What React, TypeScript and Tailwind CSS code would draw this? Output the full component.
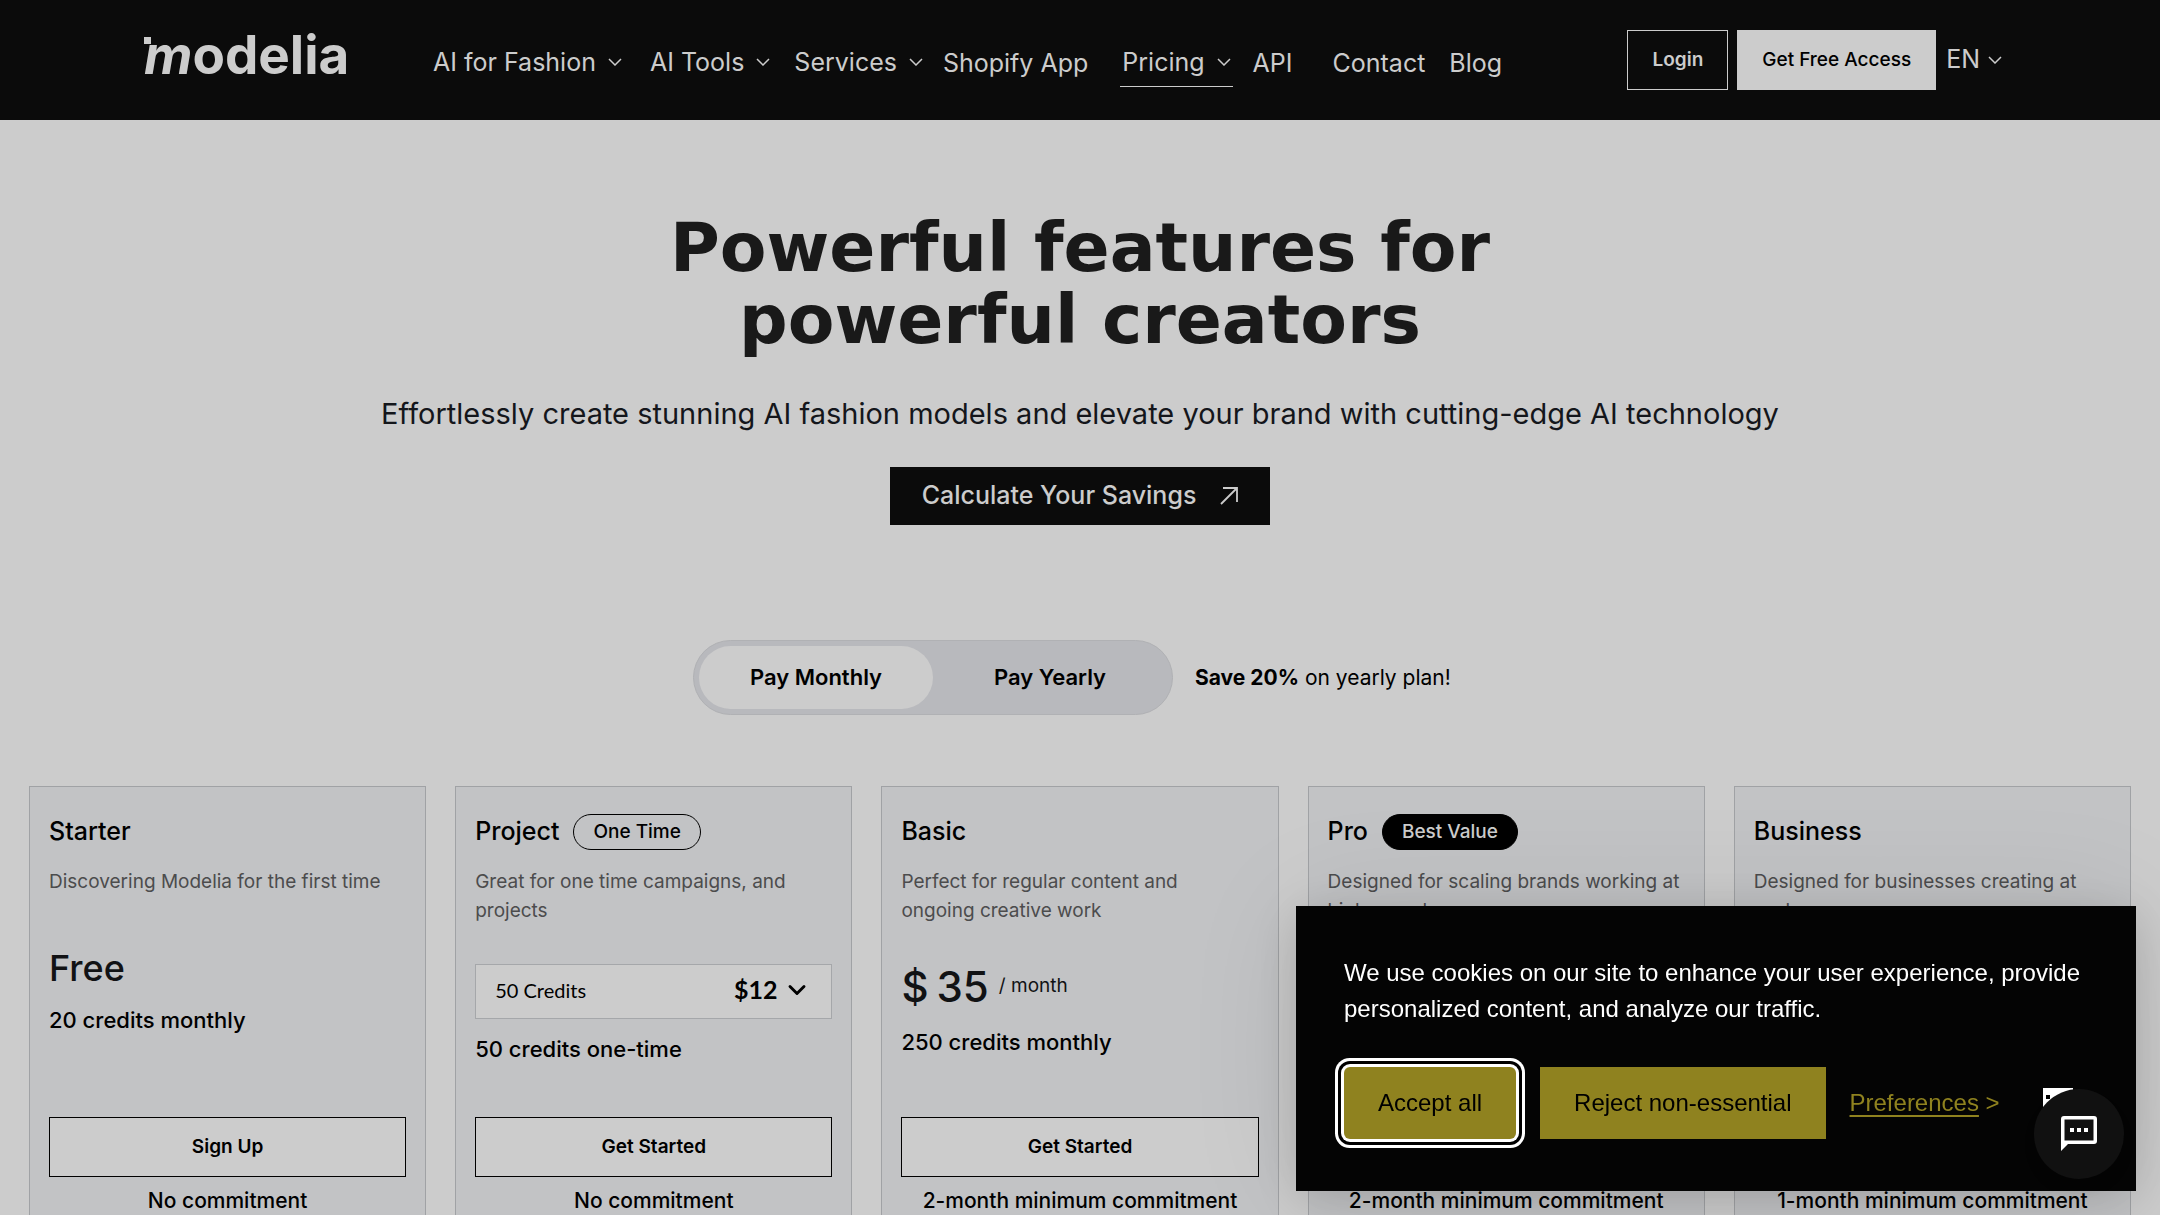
import { ChevronDown } from "lucide-react";

const navItems = [
  { label: "AI for Fashion", menu: true, style: "" },
  { label: "AI Tools", menu: true, style: "ml-7" },
  { label: "Services", menu: true, style: "ml-6" },
  { label: "Shopify App", menu: false, style: "ml-5" },
  { label: "Pricing", menu: true, active: true, style: "ml-8" },
  { label: "API", menu: false, style: "ml-5" },
  { label: "Contact", menu: false, style: "ml-10" },
  { label: "Blog", menu: false, style: "ml-6" },
];

const plans = [
  {
    name: "Starter",
    description: "Discovering Modelia for the first time",
    free: true,
    credits: "20 credits monthly",
    action: "Sign Up",
    commitment: "No commitment",
  },
  {
    name: "Project",
    badge: "One Time",
    badgeStyle: "border-black text-black",
    description: "Great for one time campaigns, and\nprojects",
    packs: ["50 Credits", "100 Credits", "200 Credits"],
    packPrice: "$12",
    credits: "50 credits one-time",
    action: "Get Started",
    commitment: "No commitment",
  },
  {
    name: "Basic",
    description: "Perfect for regular content and\nongoing creative work",
    price: 35,
    credits: "250 credits monthly",
    action: "Get Started",
    commitment: "2-month minimum commitment",
  },
  {
    name: "Pro",
    badge: "Best Value",
    badgeStyle: "border-black bg-black text-[#cccccc]",
    description: "Designed for scaling brands working at\nhigh speed",
    action: "Get Started",
    commitment: "2-month minimum commitment",
  },
  {
    name: "Business",
    description: "Designed for businesses creating at\nscale",
    action: "Get Started",
    commitment: "1-month minimum commitment",
  },
];

function Chevron({ className = "" }) {
  return (
    <svg viewBox="0 0 14 8" className={`h-2 w-3.5 ${className}`} fill="none" stroke="currentColor" strokeWidth="1.5">
      <path d="M1 1l6 6 6-6" />
    </svg>
  );
}

function Logo() {
  return (
    <a href="#" aria-label="modelia" className="relative block text-[53px] leading-[52px] font-bold">
      <span className="absolute top-2 left-0 size-[7px] bg-[#cccccc]" />
      <span className="italic">m</span>odelia
    </a>
  );
}

function NavItem({ item }) {
  const base = "flex items-center gap-3 whitespace-nowrap text-[25px] leading-8";
  if (item.menu) {
    return (
      <button
        type="button"
        className={`${base} ${item.style} border-b py-2 ${item.active ? "border-[#cccccc] px-0.5" : "border-transparent"}`}
      >
        {item.label}
        <Chevron />
      </button>
    );
  }
  return (
    <a href="#" className={`${base} ${item.style}`}>
      {item.label}
    </a>
  );
}

function Header() {
  return (
    <header className="flex h-30 items-start bg-[#0b0b0b] pr-[158px] pl-36 text-[#cccccc]">
      <div className="w-[289px] shrink-0 pt-[29px]">
        <Logo />
      </div>
      <nav className="flex items-center pt-[38px]">
        {navItems.map((item) => (
          <NavItem key={item.label} item={item} />
        ))}
      </nav>
      <div className="ml-auto flex items-center pt-[30px]">
        <button type="button" className="h-[60px] border border-[#cccccc] px-6 text-[19px] font-semibold">
          Login
        </button>
        <button type="button" className="ml-[9px] h-[60px] bg-[#cccccc] px-[25px] text-[19px] font-medium text-black">
          Get Free Access
        </button>
        <button type="button" className="ml-2.5 flex items-center gap-2 text-[25px]">
          EN
          <Chevron />
        </button>
      </div>
    </header>
  );
}

function Hero() {
  return (
    <section className="flex flex-col items-center pt-[92px] text-center">
      <h1 className="font-['DejaVu_Sans',sans-serif] text-[68px] leading-[72px] font-bold text-[#191919]">
        Powerful features for
        <br />
        powerful creators
      </h1>
      <p className="mt-[38px] text-[29px] leading-10 text-[#14161b]">
        Effortlessly create stunning AI fashion models and elevate your brand with cutting-edge AI technology
      </p>
      <a
        href="#"
        className="mt-[33px] flex h-[58px] items-center gap-6 bg-[#0b0b0b] px-8 text-[25px] font-medium text-[#cccccc]"
      >
        Calculate Your Savings
        <svg viewBox="0 0 18 18" className="size-[18px]" fill="none" stroke="currentColor" strokeWidth="1.8">
          <path d="M1 17L17 1M3 1h14v14" />
        </svg>
      </a>
    </section>
  );
}

function BillingToggle() {
  return (
    <div className="mt-[115px] flex items-center justify-center gap-[22px] text-black">
      <div className="flex h-[75px] w-[480px] rounded-full border border-[#b0b1b4] bg-[#b8b9bd] p-[5px] text-[22px] font-semibold">
        <button type="button" aria-pressed="true" className="flex-1 rounded-full bg-[#cccccc]">
          Pay Monthly
        </button>
        <button type="button" aria-pressed="false" className="flex-1 rounded-full">
          Pay Yearly
        </button>
      </div>
      <p className="min-w-68 text-[21px]">
        <b className="font-bold">Save 20%</b> on yearly plan!
      </p>
    </div>
  );
}

function PlanPrice({ plan }) {
  if (plan.free) {
    return <p className="mt-1.5 text-4xl leading-11 font-medium text-[#111214]">Free</p>;
  }
  if (plan.packs) {
    return (
      <div className="mt-6 flex h-[55px] items-center border border-[#a5a7aa] bg-[#cccccc] pr-5 pb-1 pl-[19px]">
        <select aria-label="Credit pack" className="flex-1 appearance-none font-['Lato',sans-serif] text-xl">
          {plan.packs.map((pack) => (
            <option key={pack}>{pack}</option>
          ))}
        </select>
        <span className="font-['Lato',sans-serif] text-[25px] font-bold">{plan.packPrice}</span>
        <ChevronDown className="ml-1.5 size-7" strokeWidth={2.5} />
      </div>
    );
  }
  return (
    <p className="mt-5 flex h-[52px] items-center text-[42px] font-medium text-[#111214]">
      $<span className="ml-2">{plan.price}</span>
      <span className="ml-2.5 text-[19px] font-normal">/ month</span>
    </p>
  );
}

function PlanCard({ plan }) {
  return (
    <article className="flex flex-col border border-[#a0a2a5] bg-[#c2c3c5] px-[19px] pt-[27px] pb-10 text-black">
      <div className="flex h-9 items-center gap-3.5">
        <h2 className="text-[25px] font-medium">{plan.name}</h2>
        {plan.badge && (
          <span
            className={`flex h-9 items-center rounded-full border px-[19px] text-[19px] font-medium ${plan.badgeStyle}`}
          >
            {plan.badge}
          </span>
        )}
      </div>
      <p className="mt-[17px] h-[73px] text-[19px] leading-[29px] whitespace-pre-line text-[#4c4c4d]">
        {plan.description}
      </p>
      <div className="flex h-[177px] flex-col">
        {plan.credits && (
          <>
            <PlanPrice plan={plan} />
            <p className="mt-3.5 text-[22px] leading-8 font-medium">{plan.credits}</p>
          </>
        )}
      </div>
      <button type="button" className="h-[60px] border border-black bg-[#cccccc] text-[19px] font-semibold">
        {plan.action}
      </button>
      <p className="mt-2 text-center text-[21px] leading-8 font-medium">{plan.commitment}</p>
    </article>
  );
}

function CookieBanner() {
  return (
    <div
      role="dialog"
      aria-label="Cookie consent"
      className="fixed right-6 bottom-6 w-[840px] bg-[#040404] px-12 pt-[49px] pb-[52px] font-['Liberation_Sans',sans-serif] text-2xl text-white shadow-[0_8px_48px_rgba(0,0,0,0.15),0_0_120px_rgba(0,0,0,0.08)]"
    >
      <p className="leading-9">
        We use cookies on our site to enhance your user experience, provide personalized content, and analyze our
        traffic.
      </p>
      <div className="mt-10 flex items-center">
        <button
          type="button"
          className="h-[72px] rounded-md bg-[#8f821f] px-[34px] text-black shadow-[0_0_0_3px_#fff,0_0_0_6px_#000,0_0_0_9px_#fff]"
        >
          Accept all
        </button>
        <button type="button" className="ml-6 h-[72px] bg-[#8f821f] px-[34px] text-black">
          Reject non-essential
        </button>
        <a href="#" className="ml-6 whitespace-nowrap text-[#8f821f]">
          <span className="underline decoration-2 underline-offset-4">Preferences</span> &gt;
        </a>
      </div>
      <div className="absolute right-[63px] bottom-[73px] size-[30px] bg-white">
        <span className="absolute top-[7px] left-[3px] size-1 bg-black" />
      </div>
    </div>
  );
}

function ChatButton() {
  return (
    <button
      type="button"
      aria-label="Open chat"
      className="fixed right-9 bottom-9 flex size-[90px] items-center justify-center rounded-full bg-[#111111] text-white shadow-lg"
    >
      <svg viewBox="0 0 36 36" className="size-9" fill="none">
        <path
          d="M3 0h30a3 3 0 0 1 3 3v22a3 3 0 0 1-3 3H7l-7 7V3a3 3 0 0 1 3-3zM3.500 3.500v21h29v-21z"
          fill="currentColor"
          fillRule="evenodd"
        />
        <path d="M9 12h4v4H9zM16 12h4v4h-4zM23 12h4v4h-4z" fill="currentColor" />
      </svg>
    </button>
  );
}

export default function App() {
  return (
    <div className="h-screen overflow-hidden bg-[#cccccc] font-['Inter',sans-serif]">
      <Header />
      <main>
        <Hero />
        <BillingToggle />
        <section className="mt-[71px] grid grid-cols-5 gap-[29px] px-[29px]">
          {plans.map((plan) => (
            <PlanCard key={plan.name} plan={plan} />
          ))}
        </section>
      </main>
      <CookieBanner />
      <ChatButton />
    </div>
  );
}
